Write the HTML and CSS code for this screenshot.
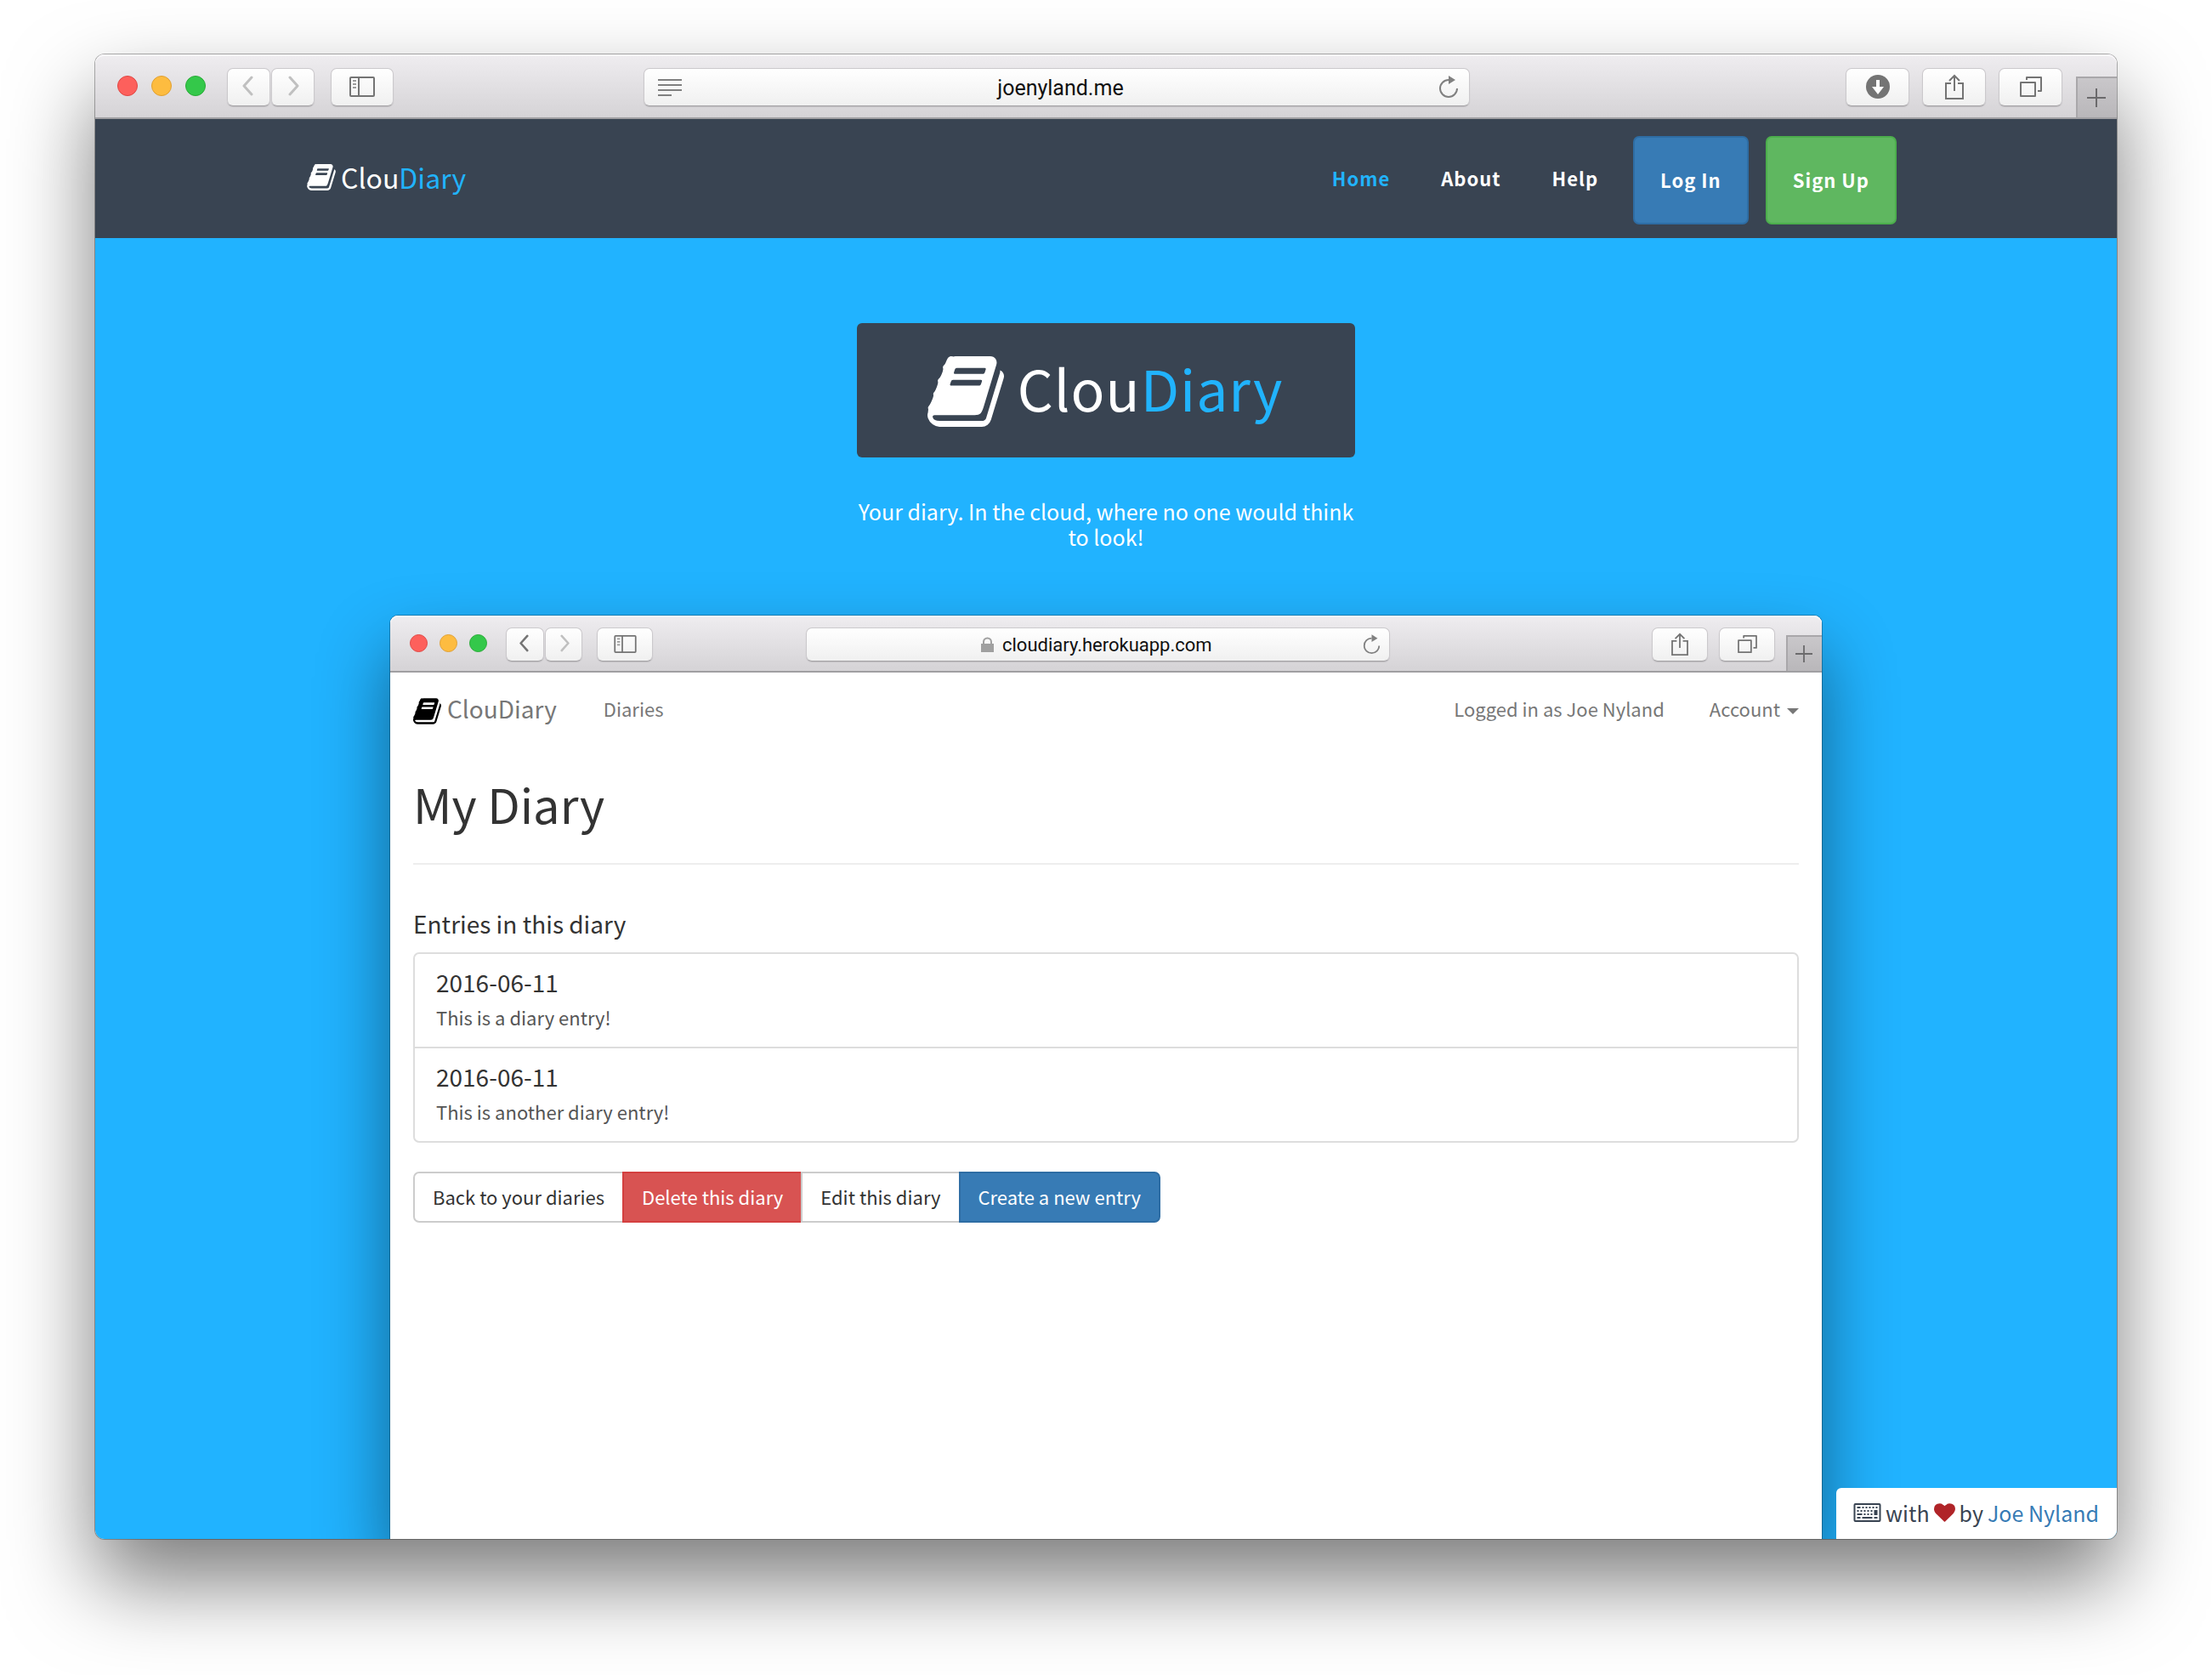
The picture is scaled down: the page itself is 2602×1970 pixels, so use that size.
FILE: index.html
```html
<!DOCTYPE html>
<html lang="en">
<head>
<meta charset="utf-8">
<meta name="viewport" content="width=device-width, initial-scale=1">
<title>ClouDiary</title>
<link rel="stylesheet" href="styles.css">
</head>
<body>

<svg class="sprite" aria-hidden="true">
  <symbol id="book" viewBox="64 128 1664 1536"><path fill="currentColor" d="M1703 478q40 57 18 129l-275 906q-19 64-76.5 107.5t-122.5 43.5h-923q-77 0-148.500-53.500t-99.500-131.500q-24-67-2-127 0-4 3-27t4-37q1-8-3-21.500t-3-19.500q2-11 8-21t16.500-23.500 16.500-23.500q23-38 45-91.500t30-91.500q3-10 .5-30t-.5-28q3-11 17-28t17-23q21-36 42-92t25-90q1-9-2.500-32t.5-28q4-13 22-30.500t22-22.500q19-26 42.500-84.500t27.500-96.500q1-8-3-25.500t-2-26.500q2-8 9-18t18-23 17-21q8-12 16.500-30.500t15-35 16-36 19.500-32 26.500-23.500 36-11.500 47.500 5.500l-1 3q38-9 51-9h761q74 0 114 56t18 130l-274 906q-36 119-71.500 153.500t-128.500 34.500h-869q-27 0-38 15-11 16-1 43 24 70 144 70h923q29 0 56-15.500t35-41.500l300-987q7-22 5-57 38 15 59 43zm-1064 2q-4 13 2 22.500t20 9.500h608q13 0 25.500-9.500t16.500-22.500l21-64q4-13-2-22.500t-20-9.500h-608q-13 0-25.500 9.500t-16.500 22.500zm-83 256q-4 13 2 22.500t20 9.500h608q13 0 25.500-9.500t16.500-22.500l21-64q4-13-2-22.500t-20-9.500h-608q-13 0-25.500 9.500t-16.500 22.500z"/></symbol>
  <symbol id="back" viewBox="0 0 14 24"><path d="M12 2 3 12l9 10" fill="none" stroke="currentColor" stroke-width="3" stroke-linecap="round" stroke-linejoin="round"/></symbol>
  <symbol id="forward" viewBox="0 0 14 24"><path d="m2 2 9 10-9 10" fill="none" stroke="currentColor" stroke-width="3" stroke-linecap="round" stroke-linejoin="round"/></symbol>
  <symbol id="sidebar" viewBox="0 0 30 24"><g fill="none" stroke="currentColor" stroke-width="2"><rect x="1" y="1" width="28" height="22" rx="1"/><path d="M11 1v22"/><path d="M4 5h4M4 9h4M4 13h4" opacity=".7"/></g></symbol>
  <symbol id="reader" viewBox="0 0 28 20"><path d="M0 1h28M0 7h28M0 13h28M0 19h16" stroke="currentColor" stroke-width="2"/></symbol>
  <symbol id="reload" viewBox="0 0 24 28"><path d="M22 15A10 10 0 1 1 12 5" fill="none" stroke="currentColor" stroke-width="2"/><path d="M12 0v10l8-5z" fill="currentColor"/></symbol>
  <symbol id="download" viewBox="0 0 28 28"><circle cx="14" cy="14" r="14" fill="currentColor"/><path d="M12 6h4v8h5l-7 9-7-9h5z" fill="#fff"/></symbol>
  <symbol id="share" viewBox="0 0 22 30"><path d="M7 11H1v18h20V11h-6M11 20V2M5 8l6-6 6 6" fill="none" stroke="currentColor" stroke-width="2"/></symbol>
  <symbol id="tabs" viewBox="0 0 26 24"><path d="M1 7h17v16H1zM8 4V1h17v16h-4" fill="none" stroke="currentColor" stroke-width="2" stroke-linejoin="round"/></symbol>
  <symbol id="plus" viewBox="0 0 22 22"><path d="M11 0v22M0 11h22" stroke="currentColor" stroke-width="2"/></symbol>
  <symbol id="lock" viewBox="0 0 15 18"><path d="M0 8h15v10H0z" fill="currentColor"/><path d="M3 9V6a4 4 0 0 1 9 0v3" fill="none" stroke="currentColor" stroke-width="2"/></symbol>
  <symbol id="keyboard" viewBox="0 0 32 22"><rect x="1" y="1" width="30" height="20" rx="1" fill="none" stroke="currentColor" stroke-width="2"/><path d="M4 5h4M10 5h2M14 5h2M18 5h2M22 5h2M26 5h2M4 9h2M8 9h2M12 9h2M16 9h2M20 9h2M4 13h4M8 13h2M12 13h2M16 13h2M20 13h2M4 17h4M10 17h12M24 17h4" stroke="currentColor" stroke-width="2"/><path d="M24 8h4v6h-4z" fill="currentColor"/></symbol>
  <symbol id="heart" viewBox="0 128 1792 1536"><path fill="currentColor" d="M896 1664q-26 0-44-18l-624-602q-10-8-27.500-26t-55.500-65.500-68-97.500-53.500-121-23.500-138q0-220 127-344t351-124q62 0 126.500 21.500t120 58 95.500 68.500 76 68q36-36 76-68t95.500-68.500 120-58 126.500-21.500q224 0 351 124t127 344q0 221-229 450l-623 600q-18 18-44 18z"/></symbol>
</svg>

<div class="browser">
  <header class="toolbar">
    <div class="group">
      <div class="lights"><span class="light red"></span><span class="light yellow"></span><span class="light green"></span></div>
      <div class="history">
        <button class="tool step" type="button" aria-label="Back" disabled><svg class="i-step"><use href="#back"/></svg></button>
        <button class="tool step" type="button" aria-label="Forward" disabled><svg class="i-step"><use href="#forward"/></svg></button>
      </div>
      <button class="tool" type="button" aria-label="Sidebar"><svg class="i-sidebar"><use href="#sidebar"/></svg></button>
    </div>
    <div class="address">
      <svg class="i-reader"><use href="#reader"/></svg>
      <input class="url" type="text" aria-label="Address" value="joenyland.me">
      <svg class="i-reload"><use href="#reload"/></svg>
    </div>
    <div class="group group-end">
      <button class="tool" type="button" aria-label="Downloads"><svg class="i-download"><use href="#download"/></svg></button>
      <button class="tool" type="button" aria-label="Share"><svg class="i-share"><use href="#share"/></svg></button>
      <button class="tool" type="button" aria-label="Tabs"><svg class="i-tabs"><use href="#tabs"/></svg></button>
    </div>
    <button class="new-tab" type="button" aria-label="New tab"><svg class="i-plus"><use href="#plus"/></svg></button>
  </header>

  <nav class="site-nav">
    <div class="site-nav-inner">
      <a class="brand" href="#"><svg class="i-book"><use href="#book"/></svg><span class="brand-text">Clou<span class="accent">Diary</span></span></a>
      <div class="links">
        <a class="link active" href="#">Home</a>
        <a class="link" href="#">About</a>
        <a class="link" href="#">Help</a>
      </div>
      <a class="cta login" href="#">Log In</a>
      <a class="cta signup" href="#">Sign Up</a>
    </div>
  </nav>

  <main class="hero">
    <div class="intro">
      <h1 class="logo-card"><svg class="i-book-large"><use href="#book"/></svg><span class="logo-text">Clou<span class="accent">Diary</span></span></h1>
      <p class="tagline">Your diary. In the cloud, where no one would think to look!</p>
    </div>

    <div class="browser small">
      <header class="toolbar">
        <div class="group">
          <div class="lights"><span class="light red"></span><span class="light yellow"></span><span class="light green"></span></div>
          <div class="history">
            <button class="tool step" type="button" aria-label="Back"><svg class="i-step"><use href="#back"/></svg></button>
            <button class="tool step" type="button" aria-label="Forward" disabled><svg class="i-step"><use href="#forward"/></svg></button>
          </div>
          <button class="tool" type="button" aria-label="Sidebar"><svg class="i-sidebar"><use href="#sidebar"/></svg></button>
        </div>
        <div class="address">
          <span class="secure"><svg class="i-lock"><use href="#lock"/></svg><input class="url" type="text" aria-label="Address" value="cloudiary.herokuapp.com"></span>
          <svg class="i-reload"><use href="#reload"/></svg>
        </div>
        <div class="group group-end">
          <button class="tool" type="button" aria-label="Share"><svg class="i-share"><use href="#share"/></svg></button>
          <button class="tool" type="button" aria-label="Tabs"><svg class="i-tabs"><use href="#tabs"/></svg></button>
        </div>
        <button class="new-tab" type="button" aria-label="New tab"><svg class="i-plus"><use href="#plus"/></svg></button>
      </header>

      <div class="app">
        <nav class="app-nav">
          <a class="app-brand" href="#"><svg class="i-book"><use href="#book"/></svg><span>ClouDiary</span></a>
          <a href="#">Diaries</a>
          <span class="user">Logged in as Joe Nyland</span>
          <a class="account" href="#">Account<span class="caret"></span></a>
        </nav>
        <h2 class="title">My Diary</h2>
        <h3 class="subtitle">Entries in this diary</h3>
        <ul class="entries">
          <li class="entry"><h4>2016-06-11</h4><p>This is a diary entry!</p></li>
          <li class="entry"><h4>2016-06-11</h4><p>This is another diary entry!</p></li>
        </ul>
        <div class="actions">
          <button class="btn" type="button">Back to your diaries</button>
          <button class="btn danger" type="button">Delete this diary</button>
          <button class="btn" type="button">Edit this diary</button>
          <button class="btn primary" type="button">Create a new entry</button>
        </div>
      </div>
    </div>
  </main>

  <footer class="credit"><svg class="i-keyboard"><use href="#keyboard"/></svg><span>with</span><svg class="i-heart"><use href="#heart"/></svg><span>by</span><a href="#">Joe Nyland</a></footer>
</div>
</body>
</html>
```
FILE: styles.css
```css
* { box-sizing: border-box; }

body {
  margin: 0;
  min-height: 100vh;
  padding: 64px 112px 160px;
  display: flex;
  flex-direction: column;
  background: #fff;
  font-family: "Source Sans Pro", "Noto Sans CJK SC", sans-serif;
  font-size: 22px;
  line-height: 30px;
}

h1, h2, h3, h4, p, ul { margin: 0; padding: 0; font-weight: 400; }
a { color: inherit; text-decoration: none; }
button, input { font: inherit; }
svg { display: block; flex: none; }
.sprite { position: absolute; width: 0; height: 0; }

/* Browser window */
.browser {
  position: relative;
  flex: 1;
  display: flex;
  flex-direction: column;
  border-radius: 11px;
  box-shadow: 0 0 0 1px rgba(0, 0, 0, .3), 0 50px 100px rgba(0, 0, 0, .52);
}

.toolbar {
  display: flex;
  height: 76px;
  padding-left: 26px;
  border-bottom: 2px solid #a09fa2;
  border-radius: 11px 11px 0 0;
  background: linear-gradient(#efedf0, #d5d3d6);
  box-shadow: inset 0 2px 0 #f7f6f8;
  overflow: hidden;
}

.group { display: flex; align-items: center; gap: 19px; padding-top: 2px; }
.group-end { gap: 15px; }
.group-end .tool { width: 75px; }
.lights { display: flex; gap: 16px; padding-bottom: 2px; margin-right: 6px; }
.light { width: 24px; height: 24px; border-radius: 50%; border: 1px solid; }
.red { background: #fd605c; border-color: #e04744; }
.yellow { background: #fdbc40; border-color: #e0a033; }
.green { background: #34c84a; border-color: #28ab36; }
.history { display: flex; gap: 1px; }

.tool, .address {
  display: flex;
  align-items: center;
  justify-content: center;
  height: 45px;
  padding: 0;
  border: 1px solid #cbc9cc;
  border-bottom-color: #a5a3a6;
  border-radius: 7px;
  background: linear-gradient(#fff, #f0f0f0);
  box-shadow: 0 1px 1px rgba(0, 0, 0, .12);
  color: #747474;
}
.tool { width: 74px; }
.step { width: 51px; padding: 0 0 2px 3px; }
.step:first-child { padding: 0 4px 2px 0; }
.tool:disabled { color: #c0c0c0; }

/* The address bar sits at two fifths of the spare width */
.toolbar::before, .toolbar::after { content: ""; flex: 2; order: 1; }
.toolbar::after { flex: 3; order: 3; }
.address { order: 2; flex: 0 1 972px; margin-top: 16px; padding: 0 12px 0 16px; color: #808080; }
.group-end { order: 4; }
.new-tab { order: 5; }

.url {
  flex: 1;
  min-width: 0;
  padding: 2px 0 0;
  border: 0;
  outline: 0;
  background: none;
  color: #111;
  font: 25px/30px Roboto, sans-serif;
  text-align: center;
}

.new-tab {
  display: flex;
  align-items: center;
  justify-content: center;
  width: 48px;
  margin: 26px 0 0 16px;
  padding: 0 2px 0 0;
  border: solid #a9a7aa;
  border-width: 2px 0 0 2px;
  background: linear-gradient(#c9c7ca, #b9b7ba);
  color: #6b6a6c;
}

.i-step { width: 14px; height: 24px; }
.i-sidebar { width: 30px; height: 24px; }
.i-reader { width: 28px; height: 20px; }
.i-reload { width: 24px; height: 28px; }
.i-download { width: 28px; height: 28px; }
.i-share { width: 22px; height: 30px; }
.i-tabs { width: 26px; height: 24px; }
.i-plus { width: 22px; height: 22px; }
.i-book { width: 34px; height: 31px; }

/* Site navigation */
.site-nav { padding: 20px 120px 16px; background: #394452; color: #fff; }
.site-nav-inner {
  display: flex;
  max-width: 1880px;
  height: 104px;
  margin: 0 auto;
  padding-right: 10px;
}
.brand, .links { display: flex; align-items: center; padding-bottom: 7px; }
.brand { gap: 6px; margin-right: auto; font-size: 32px; }
.brand-text { padding-bottom: 2px; }
.accent { color: #21b3fd; }
.links { gap: 60px; margin-right: 41px; }
.link, .cta { font-size: 22px; font-weight: 700; letter-spacing: 1px; }
.active { color: #21b3fd; }
.cta {
  display: flex;
  align-items: center;
  padding: 0 30px 3px;
  border: 2px solid;
  border-radius: 7px;
}
.login { background: #377bb5; border-color: #2e6da4; margin-right: 20px; }
.signup { background: #5fb760; border-color: #4cae4c; }

/* Hero */
.hero {
  flex: 1;
  display: flex;
  flex-direction: column;
  align-items: center;
  padding-top: 100px;
  border-radius: 0 0 11px 11px;
  background: #21b3ff;
  overflow: hidden;
}
.intro { width: 586px; margin-bottom: 78px; color: #fff; text-align: center; }
.logo-card {
  display: flex;
  align-items: center;
  justify-content: center;
  gap: 16px;
  height: 158px;
  margin-bottom: 48px;
  padding: 2px 2px 0 0;
  border-radius: 6px;
  background: #394452;
}
.i-book-large { width: 90px; height: 83px; }
.logo-text { padding-bottom: 10px; font-size: 66px; line-height: 80px; letter-spacing: 1px; }
.tagline { font-size: 25px; }

/* Embedded window */
.small {
  width: 71%;
  max-width: 1684px;
  border-radius: 9px 9px 0 0;
  background: #fff;
  box-shadow: 0 0 0 1px rgba(0, 0, 0, .25), 0 42px 84px rgba(0, 0, 0, .46);
}
.small .toolbar { height: 67px; padding-left: 23px; border-radius: 9px 9px 0 0; }
.small .group { gap: 17px; padding-top: 2px; }
.small .lights { gap: 14px; margin-right: 5px; }
.small .light { width: 21px; height: 21px; }
.small .tool, .small .address { height: 40px; }
.small .tool { width: 66px; }
.small .step { width: 45px; }
.small .step:disabled { width: 44px; }
.small .address { flex-basis: 687px; margin-top: 14px; padding: 0 10px; }
.small .toolbar::before { flex: 7; }
.small .toolbar::after { flex: 12; }
.small .group-end { gap: 13px; }
.small .new-tab { width: 42px; margin: 23px 0 0 13px; }
.secure { display: flex; align-items: center; justify-content: center; gap: 8px; flex: 1; padding-left: 20px; color: #a0a0a0; }
.secure .url { flex: none; width: 250px; font-size: 22px; }
.small .i-step { width: 12px; height: 21px; }
.small .i-sidebar { width: 27px; height: 21px; }
.small .i-reload { width: 21px; height: 25px; }
.small .i-share { width: 20px; height: 27px; }
.small .i-tabs { width: 23px; height: 21px; }
.small .i-plus { width: 20px; height: 20px; }
.i-lock { width: 15px; height: 18px; }

.app { padding: 0 27px 60px; color: #333; }
.app-nav { display: flex; align-items: center; height: 85px; padding-bottom: 2px; color: #777; }
.app-brand { display: flex; align-items: center; gap: 7px; margin-right: 55px; font-size: 28px; }
.app-brand .i-book { width: 33px; height: 39px; padding-top: 8px; color: #000; }
.user { margin-left: auto; margin-right: 53px; }
.account { display: flex; align-items: center; gap: 8px; }
.caret { margin-top: 8px; border: solid transparent; border-width: 7px 7px 0; border-top-color: #777; }

.title {
  margin: 39px 0 53px;
  padding-bottom: 40px;
  border-bottom: 2px solid #eee;
  font-size: 56px;
  line-height: 60px;
}
.subtitle { margin-bottom: 18px; font-size: 28px; line-height: 32px; }

.entries { margin-bottom: 34px; border: 2px solid #ddd; border-radius: 7px; list-style: none; }
.entry { padding: 18px 26px 20px 25px; }
.entry + .entry { border-top: 2px solid #ddd; }
.entry h4 { margin-bottom: 11px; font-size: 28px; }
.entry p { color: #555; }

.actions { display: flex; }
.btn {
  height: 60px;
  margin: 0;
  padding: 0 21px 3px;
  border: 2px solid #ccc;
  background: #fff;
  color: #333;
}
.btn + .btn { margin-left: -2px; }
.btn:first-child { border-radius: 7px 0 0 7px; }
.btn:last-child { border-radius: 0 7px 7px 0; }
.danger { background: #d85352; border-color: #d43f3f; color: #fff; }
.primary { background: #377bb5; border-color: #2e6da4; color: #fff; }

/* Credit badge pinned over the page corner */
.credit {
  position: absolute;
  right: 0;
  bottom: 0;
  display: flex;
  align-items: center;
  gap: 5px;
  height: 60px;
  padding: 0 21px 2px 20px;
  border-radius: 6px 0 11px 0;
  background: #fff;
  color: #394452;
  font-size: 25px;
}
.credit a { color: #377bb5; }
.i-keyboard { width: 33px; height: 22px; }
.i-heart { width: 25px; height: 22px; color: #b02428; }
```
